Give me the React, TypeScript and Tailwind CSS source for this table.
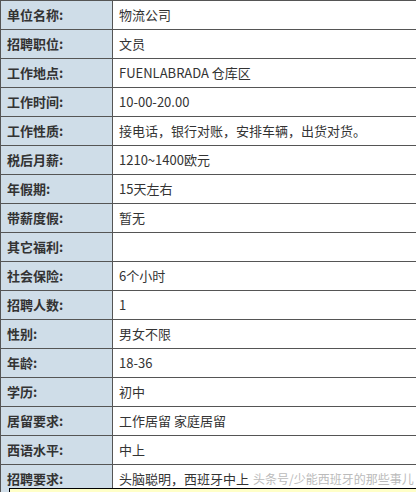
const rows: [string, string][] = [
  ["单位名称:", "物流公司"],
  ["招聘职位:", "文员"],
  ["工作地点:", "FUENLABRADA 仓库区"],
  ["工作时间:", "10-00-20.00"],
  ["工作性质:", "接电话，银行对账，安排车辆，出货对货。"],
  ["税后月薪:", "1210~1400欧元"],
  ["年假期:", "15天左右"],
  ["带薪度假:", "暂无"],
  ["其它福利:", ""],
  ["社会保险:", "6个小时"],
  ["招聘人数:", "1"],
  ["性别:", "男女不限"],
  ["年龄:", "18-36"],
  ["学历:", "初中"],
  ["居留要求:", "工作居留 家庭居留"],
  ["西语水平:", "中上"],
];

const App = () => {
  return (
    <div
      className="relative w-[416px] h-[492px] overflow-hidden bg-white text-[#333]"
      style={{ fontFamily: '"Noto Sans CJK SC", "Noto Sans", sans-serif' }}
    >
      <table className="w-[440px] border-collapse table-fixed">
        <colgroup>
          <col className="w-[112px]" />
          <col />
        </colgroup>
        <tbody>
          {rows.map(([label, value]) => (
            <tr key={label} className="h-[29px]">
              <td className="border border-[#555] bg-[#cfdde8] pl-[6px] text-[13px] font-bold">
                {label}
              </td>
              <td className="border border-[#555] pl-[6px] text-[13px] whitespace-nowrap">
                {value}
              </td>
            </tr>
          ))}
          <tr className="h-[29px]">
            <td className="border border-[#555] bg-[#cfdde8] pl-[6px] text-[13px] font-bold">
              招聘要求:
            </td>
            <td className="border border-[#555] pl-[6px] text-[13px] whitespace-nowrap">
              <span>头脑聪明，西班牙中上</span>
              <span className="ml-[4px] text-[#bbb] text-[12px]">头条号/少能西班牙的那些事儿</span>
            </td>
          </tr>
        </tbody>
      </table>
      <div className="absolute left-[9px] top-[488px] w-[420px] h-[10px] border border-black bg-[#ffffc8]" />
    </div>
  );
};

export default App;
